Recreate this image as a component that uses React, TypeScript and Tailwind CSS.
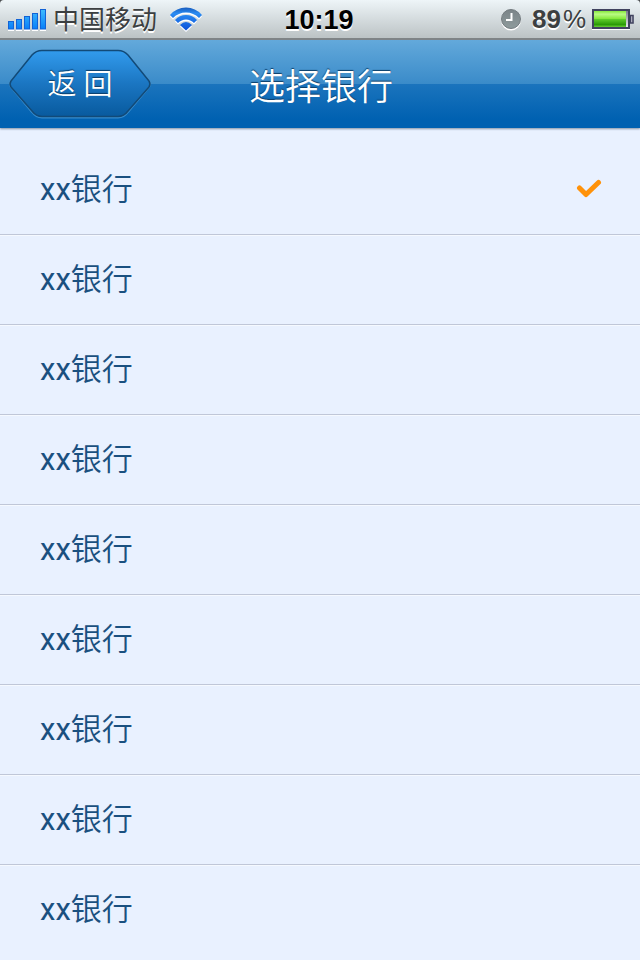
import { useState } from "react";

const BANKS = Array.from({ length: 9 }, (_, i) => ({ id: `bank-${i + 1}`, name: "xx银行" }));

function SignalIcon() {
  const bars = [
    { x: 0, h: 8 },
    { x: 8, h: 10 },
    { x: 16, h: 13 },
    { x: 24, h: 16 },
    { x: 32, h: 20 },
  ];
  return (
    <svg width="40" height="24" viewBox="0 0 40 24" aria-hidden="true">
      <defs>
        <linearGradient id="bar" x1="0" y1="0" x2="0" y2="24" gradientUnits="userSpaceOnUse">
          <stop offset="0" stopColor="#45c4ff" />
          <stop offset="0.9" stopColor="#0a80f8" />
        </linearGradient>
      </defs>
      {bars.map((b) => (
        <g key={b.x}>
          <rect x={b.x} y={23 - b.h} width="6" height={b.h + 1} fill="#fff" />
          <rect x={b.x + 0.5} y={22.5 - b.h} width="5" height={b.h - 0.5} fill="url(#bar)" stroke="#1263d6" />
        </g>
      ))}
    </svg>
  );
}

function WifiIcon() {
  return (
    <svg width="34" height="26" viewBox="0 0 34 26" aria-hidden="true">
      <defs>
        <linearGradient id="wifi" x1="0" y1="0" x2="0" y2="25" gradientUnits="userSpaceOnUse">
          <stop offset="0" stopColor="#1450b0" />
          <stop offset="0.3" stopColor="#2b8cf2" />
          <stop offset="1" stopColor="#0a4fd8" />
        </linearGradient>
        <g id="waves">
          <path d="M1 9Q7.500 1.500 17 1.500t16 7.500l-3 3Q24.500 6.500 17 6.500T4 12z" />
          <path d="M6 14Q10.500 9 17 9t11 5l-3 3Q21.500 13.500 17 13.500T9 17z" />
          <path d="M11 19Q14 16 17 16t6 3L17 24.500z" />
        </g>
      </defs>
      <use href="#waves" y="1.500" fill="#fff" />
      <use href="#waves" fill="url(#wifi)" />
    </svg>
  );
}

function ClockIcon() {
  return (
    <svg width="22" height="24" viewBox="0 0 22 24" aria-hidden="true">
      <defs>
        <linearGradient id="clock" x1="0" y1="0" x2="0" y2="1">
          <stop offset="0" stopColor="#7b8488" />
          <stop offset="1" stopColor="#8e9b9c" />
        </linearGradient>
      </defs>
      <circle cx="11" cy="13.500" r="10" fill="#fff" />
      <circle cx="11" cy="12" r="9.500" fill="url(#clock)" stroke="#737b7f" />
      <path d="M11.500 6v7H6" fill="none" stroke="#fff" strokeWidth="2" />
    </svg>
  );
}

function BatteryIcon() {
  return (
    <svg width="42" height="24" viewBox="0 0 42 24" aria-hidden="true">
      <defs>
        <linearGradient id="charge" x1="0" y1="0" x2="0" y2="1">
          <stop offset="0" stopColor="#86e83c" />
          <stop offset="0.2" stopColor="#b9fa84" />
          <stop offset="0.48" stopColor="#86e83c" />
          <stop offset="0.52" stopColor="#5ecb2a" />
          <stop offset="0.85" stopColor="#2a9a06" />
          <stop offset="1" stopColor="#69cf35" />
        </linearGradient>
        <linearGradient id="empty" x1="0" y1="0" x2="0" y2="1">
          <stop offset="0" stopColor="#747486" />
          <stop offset="1" stopColor="#f1f1f5" />
        </linearGradient>
      </defs>
      <rect x="0" y="3" width="38" height="20" fill="#fff" />
      <rect x="1" y="3" width="36" height="18" fill="url(#empty)" stroke="#41435f" strokeWidth="2" />
      <rect x="2" y="4" width="32" height="16" fill="url(#charge)" />
      <path d="M38.500 8.500H41v7.500h-2.500z" fill="#d9dbe4" stroke="#41435f" strokeWidth="1.600" />
    </svg>
  );
}

function StatusBar() {
  return (
    <div className="grid h-10 grid-cols-[1fr_auto_1fr] items-center border-b-2 border-[#7f8486] bg-linear-to-b from-[#eef5f8] to-[#bcc3c5] pr-1.5 pl-2 font-['Liberation_Sans','Noto_Sans_CJK_SC',sans-serif] [text-shadow:0_2px_0_#ffffff]">
      <div className="flex items-center">
        <SignalIcon />
        <span className="ml-[5px] pt-0.5 text-[26px] leading-9 text-[#3c3f41]">中国移动</span>
        <span className="ml-3">
          <WifiIcon />
        </span>
      </div>
      <span className="pt-0.5 pr-1 text-[27px] leading-9 font-bold text-black">10:19</span>
      <div className="flex items-center justify-end">
        <ClockIcon />
        <span className="ml-2.5 flex gap-0.5 text-[26px] leading-9 font-bold text-[#3c3f41]">
          89<span className="font-normal">%</span>
        </span>
        <span className="ml-1.5">
          <BatteryIcon />
        </span>
      </div>
    </div>
  );
}

function BackButton() {
  return (
    <button type="button" className="grid cursor-pointer place-items-center">
      <svg width="144" height="72" viewBox="0 0 144 72" className="col-start-1 row-start-1" aria-hidden="true">
        <defs>
          <linearGradient id="back" x1="0" y1="0" x2="0" y2="1">
            <stop offset="0" stopColor="#329bed" />
            <stop offset="0.5" stopColor="#1b76c2" />
            <stop offset="1" stopColor="#085a9e" />
          </linearGradient>
        </defs>
        <path d="M34 3.500H110Q116 3.500 120 8L141 33Q143 36 141 39L120 64Q116 69.500 110 69.500H34Q28 69.500 24 64L3 39Q1 36 3 33L24 8Q28 3.500 34 3.500Z" fill="none" stroke="#5aa9e0" strokeOpacity="0.6" strokeWidth="2" />
        <path d="M34 2.500H110Q116 2.500 120 7L141 33Q143 36 141 39L120 63Q116 68.500 110 68.500H34Q28 68.500 24 63L3 39Q1 36 3 33L24 7Q28 2.500 34 2.500Z" fill="url(#back)" stroke="#124a78" strokeWidth="1.500" />
      </svg>
      <span className="col-start-1 row-start-1 pt-0.5 text-[29px] leading-10 text-white [text-shadow:0_-1px_1px_#0b3d68]">返 回</span>
    </button>
  );
}

function CheckIcon() {
  return (
    <svg width="26" height="20" viewBox="0 0 26 20" className="invisible peer-checked:visible" aria-hidden="true">
      <path d="M3.500 10L10 16.500L22.500 4.500" fill="none" stroke="#ff920a" strokeWidth="5" strokeLinecap="round" strokeLinejoin="round" />
    </svg>
  );
}

export default function App() {
  const [selected, setSelected] = useState(BANKS[0].id);

  return (
    <div className="min-h-screen bg-[#e9f1ff] font-['Roboto','Noto_Sans_CJK_SC_DemiLight','Noto_Sans_CJK_SC',sans-serif]">
      <div className="bg-[#4a4d50]">
        <div className="overflow-hidden rounded-t-sm">
          <StatusBar />
        </div>
      </div>
      <header className="grid h-22 grid-cols-[1fr_auto_1fr] items-center pl-2 shadow-[0_1px_2px_#8391a5] [background-image:linear-gradient(#63a9db,#3a8bc9_50%,#1b74bd_50%,#0061b1_90%)]">
        <div className="flex">
          <BackButton />
        </div>
        <h1 id="page-title" className="pt-2 pr-1.5 text-4xl leading-12 text-white [text-shadow:0_-1px_1px_#0b3d68]">
          选择银行
        </h1>
      </header>
      <main className="pt-[17px]">
        <div role="radiogroup" aria-labelledby="page-title">
          {BANKS.map((bank) => (
            <label
              key={bank.id}
              htmlFor={bank.id}
              className="flex h-[90px] cursor-pointer items-center justify-between border-b border-[#c0c7d8] pr-[38px] pb-1 pl-10 text-[31px] text-[#1a5080] shadow-[0_1px_0_#f5f9ff] last:border-transparent last:shadow-none"
            >
              <span className="pt-1.5">{bank.name}</span>
              <input
                id={bank.id}
                type="radio"
                name="bank"
                className="peer sr-only"
                checked={selected === bank.id}
                onChange={() => setSelected(bank.id)}
              />
              <CheckIcon />
            </label>
          ))}
        </div>
      </main>
    </div>
  );
}
